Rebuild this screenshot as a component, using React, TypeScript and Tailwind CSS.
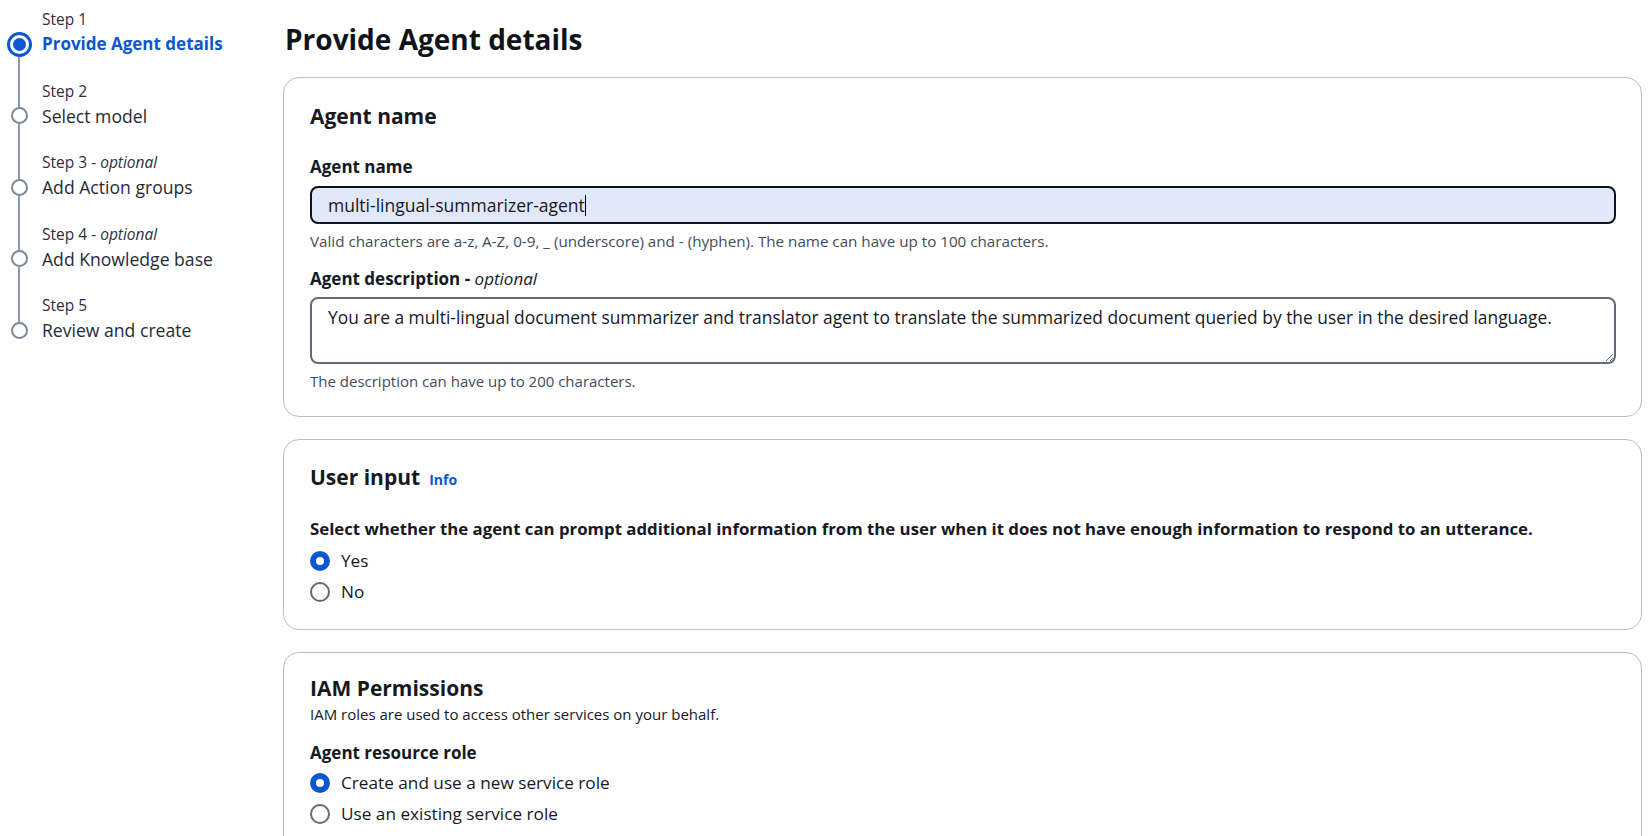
import React from "react";

const FONT = { fontFamily: '"Open Sans", "Noto Sans", Arial, sans-serif' };

type Step = { label: string; optional?: boolean; title: string; active?: boolean };

const steps: Step[] = [
  { label: "Step 1", title: "Provide Agent details", active: true },
  { label: "Step 2", title: "Select model" },
  { label: "Step 3", optional: true, title: "Add Action groups" },
  { label: "Step 4", optional: true, title: "Add Knowledge base" },
  { label: "Step 5", title: "Review and create" },
];

function Stepper() {
  return (
    <nav className="w-[283px] shrink-0 pt-[7px]">
      {steps.map((s, i) => {
        const first = i === 0;
        const last = i === steps.length - 1;
        return (
          <div key={s.label} className="flex">
            <div className="w-[38px] flex flex-col items-center">
              <div className={`h-[24px] w-[2px] ${first ? "" : "bg-[#8d99a8]"}`} />
              <div className="h-[26px] flex flex-col items-center">
                <div className={`flex-1 w-[2px] ${first ? "" : "bg-[#8d99a8]"}`} />
                {s.active ? (
                  <div className="w-[25px] h-[25px] rounded-full border-[3px] border-[#0b57d0] flex items-center justify-center">
                    <div className="w-[13px] h-[13px] rounded-full bg-[#0b57d0]" />
                  </div>
                ) : (
                  <div className="w-[17px] h-[17px] rounded-full border-2 border-[#7d8998]" />
                )}
                <div className={`flex-1 w-[2px] ${last ? "" : "bg-[#8d99a8]"}`} />
              </div>
              {!last && <div className="h-[21.5px] w-[2px] bg-[#8d99a8]" />}
            </div>
            <div className="ml-[4px] flex flex-col">
              <div className="h-[24px] leading-[24px] text-[15.5px] text-[#2a323d] whitespace-nowrap">
                {s.label}
                {s.optional && (
                  <>
                    {" - "}
                    <i>optional</i>
                  </>
                )}
              </div>
              <div
                className={`h-[26px] leading-[26px] whitespace-nowrap ${
                  s.active ? "text-[17px] font-bold text-[#0b57d0]" : "text-[17.6px] text-[#232b36]"
                }`}
              >
                {s.title}
              </div>
              {!last && <div className="h-[21.5px]" />}
            </div>
          </div>
        );
      })}
    </nav>
  );
}

function Card({ children, className = "" }: { children: React.ReactNode; className?: string }) {
  return (
    <section
      className={`border border-[#b6bec9] rounded-[16px] pl-[26px] pr-[25px] bg-white ${className}`}
    >
      {children}
    </section>
  );
}

function Radio({ checked, label }: { checked?: boolean; label: string }) {
  return (
    <div className="h-[30.5px] flex items-center">
      {checked ? (
        <div className="w-[20px] h-[20px] rounded-full bg-[#0b57d0] flex items-center justify-center">
          <div className="w-[8px] h-[8px] rounded-full bg-white" />
        </div>
      ) : (
        <div className="w-[20px] h-[20px] rounded-full border-2 border-[#5f6b7a]" />
      )}
      <span className="ml-[11px] text-[17.2px] text-[#16191f] whitespace-nowrap">{label}</span>
    </div>
  );
}

export default function App() {
  return (
    <div className="w-[1650px] h-[836px] overflow-hidden bg-white flex text-[#16191f]" style={FONT}>
      <Stepper />
      <main className="flex-1 pr-[8px] pt-[21px]">
        <h1 className="text-[28px] leading-[36px] font-bold text-[#0f141a] ml-[2px]">
          Provide Agent details
        </h1>
        <div className="mt-[20px] flex flex-col gap-[22px]">
          <Card className="pt-[24px] pb-[26px]">
            <h2 className="text-[21px] leading-[28px] font-bold">Agent name</h2>
            <div className="mt-[26px] text-[17px] leading-[22px] font-bold">Agent name</div>
            <div className="mt-[8px] h-[38px] rounded-[8px] border-2 border-[#0f141a] bg-[#e0e8f9] pl-[16px] flex items-center text-[17.5px]">
              <span>multi-lingual-summarizer-agent</span>
              <span className="inline-block w-[1px] h-[21px] bg-black" />
            </div>
            <div className="mt-[8px] text-[15.2px] leading-[18px] text-[#414d5c]">
              Valid characters are a-z, A-Z, 0-9, _ (underscore) and - (hyphen). The name can have up to 100 characters.
            </div>
            <div className="mt-[18px] text-[17px] leading-[22px]">
              <span className="font-bold">Agent description - </span>
              <i>optional</i>
            </div>
            <textarea
              readOnly
              className="mt-[7px] block w-full h-[67px] rounded-[8px] border-2 border-[#5f6b7a] pl-[16px] pt-[7px] text-[17.4px] leading-[22px] outline-none text-[#16191f]"
              value="You are a multi-lingual document summarizer and translator agent to translate the summarized document queried by the user in the desired language."
              style={FONT}
            />
            <div className="mt-[8px] text-[15px] leading-[18px] text-[#414d5c]">
              The description can have up to 200 characters.
            </div>
          </Card>

          <Card className="pt-[23px] pb-[22px]">
            <h2 className="text-[21px] leading-[28px] font-bold flex items-baseline">
              User input
              <span className="ml-[9px] text-[14px] font-bold text-[#0b57d0]">Info</span>
            </h2>
            <div className="mt-[24px] text-[16.8px] leading-[22px] font-bold">
              Select whether the agent can prompt additional information from the user when it does not have enough information to respond to an utterance.
            </div>
            <div className="mt-[6px]">
              <Radio checked label="Yes" />
              <Radio label="No" />
            </div>
          </Card>

          <Card className="pt-[21px] pb-[24px]">
            <h2 className="text-[21px] leading-[28px] font-bold">IAM Permissions</h2>
            <div className="mt-[3px] text-[15px] leading-[18px] text-[#16191f]">
              IAM roles are used to access other services on your behalf.
            </div>
            <div className="mt-[19px] text-[17px] leading-[22px] font-bold">Agent resource role</div>
            <div className="mt-[4px]">
              <Radio checked label="Create and use a new service role" />
              <Radio label="Use an existing service role" />
            </div>
          </Card>
        </div>
      </main>
    </div>
  );
}
